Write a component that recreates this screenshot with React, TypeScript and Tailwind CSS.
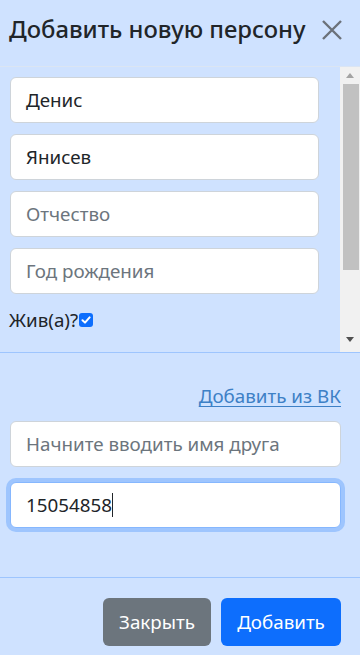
import React from "react";

const font = { fontFamily: '"Noto Sans", "Open Sans", sans-serif' };

function Field({ value, placeholder, w = "w-[309px]", h = "h-[46px]" }: { value?: string; placeholder?: string; w?: string; h?: string }) {
  return (
    <div className={`${w} ${h} shrink-0 rounded-[6px] border border-[#ced4da] bg-white px-[15px] flex items-center text-[18.8px] ${value ? "text-[#212529]" : "text-[#6c757d]"}`}>
      {value ?? placeholder}
    </div>
  );
}

export default function App() {
  return (
    <div className="w-[360px] h-[655px] bg-[#cfe2ff] flex flex-col overflow-hidden" style={font}>
      <div className="h-[67px] shrink-0 flex items-center justify-between pl-[9px] pr-[17px] border-b border-[#dbe5f3]">
        <div className="text-[23.8px] font-medium text-[#212529] pb-[6px] whitespace-nowrap">Добавить новую персону</div>
        <svg width="22" height="22" viewBox="0 0 22 22" className="mb-[6px] shrink-0">
          <path d="M2 2 L20 20 M20 2 L2 20" stroke="#6b717a" strokeWidth="2.4" strokeLinecap="butt" />
        </svg>
      </div>
      <div className="h-[286px] shrink-0 flex border-b border-[#9ec5fe]">
        <div className="flex-1 overflow-hidden pl-[10px] pt-[10px] flex flex-col gap-[11px]">
          <Field value="Денис" />
          <Field value="Янисев" />
          <Field placeholder="Отчество" />
          <Field placeholder="Год рождения" />
          <div className="flex items-center text-[18.8px] text-[#212529] -ml-[1px] mt-[1px]">
            <span>Жив(а)?</span>
            <span className="ml-[1px] w-[14px] h-[14px] rounded-[3px] bg-[#0d6efd] flex items-center justify-center">
              <svg width="10" height="10" viewBox="0 0 10 10">
                <path d="M1.5 5.2 L4 7.6 L8.6 2.4" stroke="white" strokeWidth="2" fill="none" strokeLinecap="round" strokeLinejoin="round" />
              </svg>
            </span>
          </div>
        </div>
        <div className="w-[20px] bg-[#f1f1f1] flex flex-col items-center">
          <div className="h-[17px] w-full flex items-center justify-center">
            <svg width="8" height="5" viewBox="0 0 8 5"><path d="M0 5 L4 0 L8 5 Z" fill="#a3a3a3" /></svg>
          </div>
          <div className="w-[16px] h-[186px] bg-[#c1c1c1] ml-[1px]" />
          <div className="flex-1" />
          <div className="h-[17px] w-full flex items-center justify-center mb-[4px]">
            <svg width="8" height="5" viewBox="0 0 8 5"><path d="M0 0 L8 0 L4 5 Z" fill="#505050" /></svg>
          </div>
        </div>
      </div>
      <div className="h-[225px] shrink-0 border-b border-[#9ec5fe] px-[10px] flex flex-col">
        <div className="flex justify-end pt-[29px] pr-[9px]">
          <span className="text-[18.8px] text-[#3d80c6] underline underline-offset-[3px]">Добавить из ВК</span>
        </div>
        <div className="mt-[11px] flex flex-col gap-[15px]">
          <Field placeholder="Начните вводить имя друга" w="w-[331px]" h="h-[46px]" />
          <div className="w-[331px] h-[46px] rounded-[6px] border border-[#86b7fe] bg-white px-[15px] flex items-center text-[18.8px] text-[#212529] shadow-[0_0_0_4px_rgba(13,110,253,0.25)]">
            15054858<span className="inline-block w-[1px] h-[24px] bg-[#212529]" />
          </div>
        </div>
      </div>
      <div className="flex-1 flex justify-end items-start pt-[20px] pr-[19px] gap-[10px]">
        <button className="h-[48px] w-[108px] rounded-[6px] bg-[#6c757d] text-white text-[18.8px]">Закрыть</button>
        <button className="h-[48px] w-[120px] rounded-[6px] bg-[#0d6efd] text-white text-[18.8px]">Добавить</button>
      </div>
    </div>
  );
}
